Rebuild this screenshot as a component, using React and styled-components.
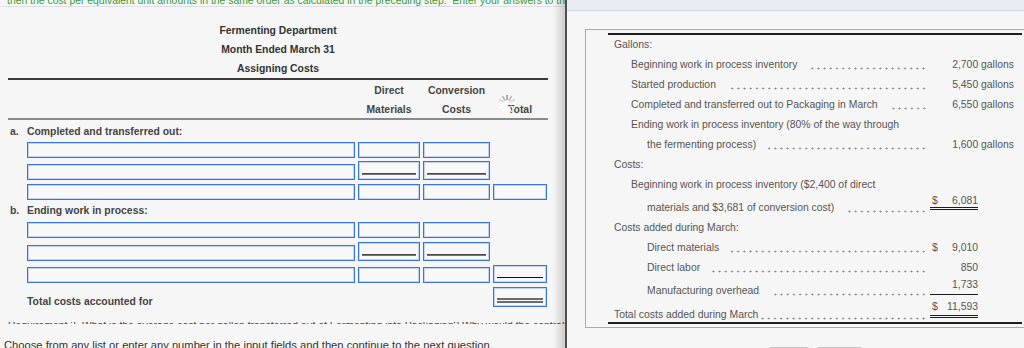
import React from 'react';
import styled, { createGlobalStyle } from 'styled-components';

const Global = createGlobalStyle`
  html, body { margin: 0; padding: 0; background: #f6f6f6; }
  body { font-family: "Liberation Sans", Arial, sans-serif; }
  #root { width: 1024px; height: 348px; overflow: hidden; }
`;

const Page = styled.div`
  display: flex;
  width: 1024px;
  height: 348px;
  overflow: hidden;
  background: #f6f6f6;
  font-family: "Liberation Sans", Arial, sans-serif;
`;

/* ---------- left panel ---------- */
const LeftPanel = styled.div`
  position: relative;
  flex: none;
  width: 565px;
  height: 100%;
  overflow: hidden;
  border-right: 2px solid #505050;
  &::after {
    content: "";
    position: absolute;
    top: 0;
    right: 0;
    bottom: 0;
    width: 12px;
    background: linear-gradient(to right, rgba(0, 0, 0, 0), rgba(0, 0, 0, 0.17));
    pointer-events: none;
  }
`;

const TopNote = styled.div`
  margin-top: -5px;
  height: 11px;
  padding-left: 7px;
  font-size: 10.4px;
  line-height: 12px;
  color: #3a9a3a;
  white-space: nowrap;
  overflow: hidden;
  border-bottom: 1px solid #dde1e7;
`;

const Sheet = styled.div`
  width: 540px;
  margin: 14px 0 0 8px;
`;

const Heading = styled.div`
  text-align: center;
  font-size: 10.4px;
  font-weight: bold;
  line-height: 19px;
  color: #333;
`;

const Rule = styled.div`
  height: 2px;
  background: ${(p) => p.$tone};
`;

const LineGrid = styled.div`
  position: relative;
  display: grid;
  grid-template-columns: 328px 62px 67px 54px;
  column-gap: 3px;
  align-items: end;
  padding-left: 19px;
  margin-top: ${(p) => p.$mt || 0}px;
`;

const ColHeadRow = styled(LineGrid)`
  height: 38px;
  box-sizing: border-box;
  padding-top: 1px;
  align-items: start;
`;

const ColHead = styled.div`
  grid-column: ${(p) => p.$col};
  text-align: center;
  font-size: 10.4px;
  font-weight: bold;
  color: #444;
  line-height: 19px;
`;

const HeadLine = styled.div`
  height: 19px;
`;

const Spinner = styled.svg`
  position: absolute;
  left: 489px;
  top: 14px;
  width: 20px;
  height: 20px;
`;

const SectionLabel = styled.div`
  display: flex;
  margin-top: ${(p) => p.$mt}px;
  padding-left: 2px;
  font-size: 10.4px;
  font-weight: bold;
  line-height: 18px;
  color: #444;
`;

const Marker = styled.span`
  flex: none;
  width: 17px;
`;

const Field = styled.div`
  position: relative;
  grid-column: ${(p) => p.$col};
  height: ${(p) => p.$h || 16}px;
  box-sizing: border-box;
  border: 1px solid #3a74d6;
  box-shadow: inset 0 0 0 1px rgba(58, 116, 214, 0.28);
  background: #f8f8f8;
  &::after {
    content: "";
    position: absolute;
    left: 3px;
    right: 3px;
    display: ${(p) => (p.$line ? 'block' : 'none')};
    bottom: ${(p) => (p.$line === 'double' ? 3 : 4)}px;
    height: ${(p) => (p.$line === 'double' ? 5 : p.$line === 'black' ? 1 : 2)}px;
    box-sizing: border-box;
    background: ${(p) =>
      p.$line === 'gray' ? 'linear-gradient(#333, #8a8a8a)' : p.$line === 'black' ? '#111' : 'transparent'};
    border-top: ${(p) => (p.$line === 'double' ? '2px solid #6a6a6a' : 'none')};
    border-bottom: ${(p) => (p.$line === 'double' ? '2px solid #6a6a6a' : 'none')};
  }
`;

const TotalLabel = styled.div`
  grid-column: 1 / 4;
  font-size: 10.4px;
  font-weight: bold;
  line-height: 10px;
  color: #444;
`;

const ClipLine = styled.div`
  height: 2px;
  margin-top: 15px;
  overflow: hidden;
  padding-left: 8px;
`;

const ClipText = styled.div`
  margin-top: -2px;
  font-size: 10.4px;
  line-height: 12px;
  color: #444;
  white-space: nowrap;
`;

const Instruction = styled.div`
  margin-top: 14px;
  padding-left: 4px;
  font-size: 11.2px;
  line-height: 14px;
  color: #333;
  white-space: nowrap;
`;

/* ---------- right panel ---------- */
const RightPanel = styled.div`
  flex: 1;
  min-width: 0;
  height: 100%;
  overflow: hidden;
  display: flex;
  flex-direction: column;
`;

const TopBar = styled.div`
  flex: none;
  height: 10px;
  background: #e9edf2;
  border-bottom: 1px solid #c6d9ef;
`;

const RightBody = styled.div`
  padding: 18px 0 0 18px;
`;

const DataBox = styled.div`
  width: 445px;
  box-sizing: border-box;
  border: 1px solid #ababab;
  padding: 3px 7px 3px 22px;
  font-size: 10.4px;
  color: #555;
`;

const BoxRule = styled.div`
  height: 2px;
  background: #1e1e1e;
`;

const DataRow = styled.div`
  display: flex;
  align-items: flex-end;
  height: ${(p) => p.$h}px;
`;

const Label = styled.span`
  flex: none;
  white-space: nowrap;
  margin-left: ${(p) => p.$indent}px;
  line-height: ${(p) => p.$lh}px;
`;

const Leader = styled.span`
  flex: 1;
  min-width: 0;
  height: ${(p) => p.$lh}px;
  margin-left: ${(p) => p.$gap}px;
  background-image: radial-gradient(circle at 3.1px 1.5px, #858585 0.75px, rgba(133, 133, 133, 0) 1.2px);
  background-size: 6.2px 3px;
  background-repeat: repeat-x;
  background-position: right 0 bottom ${(p) => (p.$lh === 20 ? 5.5 : 2.5)}px;
`;

const Gallons = styled.span`
  flex: none;
  width: 87px;
  margin-right: 8px;
  text-align: right;
  line-height: 20px;
  white-space: nowrap;
`;

const Money = styled.span`
  flex: none;
  display: flex;
  justify-content: space-between;
  width: 48px;
  box-sizing: border-box;
  margin: 0 44px ${(p) => p.$mb || 0}px 3px;
  padding: 0 0 ${(p) => p.$pb || 0}px 2px;
  line-height: ${(p) => p.$lh}px;
  border-bottom: ${(p) =>
    p.$rule === 'double' ? '3px double #1e1e1e' : p.$rule === 'single' ? '1px solid #1e1e1e' : 'none'};
`;

const ButtonRow = styled.div`
  display: flex;
  gap: 6px;
  margin-top: 19px;
  padding-left: 183px;
`;

const GhostButton = styled.button`
  width: ${(p) => p.$w}px;
  height: 24px;
  padding: 0;
  border: 1px solid #c4c4c4;
  border-radius: 3px;
  background: #efefef;
`;

const rows = [
  { label: 'Gallons:', indent: 6 },
  { label: 'Beginning work in process inventory', indent: 23, dots: true, gal: '2,700 gallons' },
  { label: 'Started production', indent: 23, dots: true, gal: '5,450 gallons' },
  { label: 'Completed and transferred out to Packaging in March', indent: 23, dots: true, gal: '6,550 gallons' },
  { label: 'Ending work in process inventory (80% of the way through', indent: 23 },
  { label: 'the fermenting process)', indent: 39, dots: true, gal: '1,600 gallons' },
  { label: 'Costs:', indent: 6 },
  { label: 'Beginning work in process inventory ($2,400 of direct', indent: 23 },
  {
    label: 'materials and $3,681 of conversion cost)',
    indent: 39,
    dots: true,
    h: 23,
    money: { sign: '$', amt: '6,081', rule: 'double', lh: 12, pb: 0, mb: 8 },
  },
  { label: 'Costs added during March:', indent: 6 },
  { label: 'Direct materials', indent: 39, dots: true, money: { sign: '$', amt: '9,010', lh: 20 } },
  { label: 'Direct labor', indent: 39, dots: true, money: { amt: '850', lh: 20 } },
  {
    label: 'Manufacturing overhead',
    indent: 39,
    dots: true,
    h: 23,
    money: { amt: '1,733', rule: 'single', lh: 12, pb: 3, mb: 6 },
  },
  {
    label: 'Total costs added during March',
    indent: 6,
    dots: true,
    h: 21,
    lh: 14,
    gap: 1,
    money: { sign: '$', amt: '11,593', rule: 'double', lh: 12, pb: 2, mb: 4 },
  },
];

const spokes = Array.from({ length: 12 }, (_, i) => i * 30);
const spokeStyle = (a) => {
  if (a === 0) return { stroke: '#8f8f8f', opacity: 0.85 };
  if (a === 30 || a === 330) return { stroke: '#9a9a9a', opacity: 0.7 };
  if (a === 60 || a === 300) return { stroke: '#b0b0b0', opacity: 0.45 };
  return { stroke: '#ffffff', opacity: 0.85 };
};

function LoadingSpinner() {
  return (
    <Spinner viewBox="0 0 20 20">
      {spokes.map((a) => {
        const s = spokeStyle(a);
        return (
          <line
            key={a}
            x1="10"
            y1="1.5"
            x2="10"
            y2="5.5"
            stroke={s.stroke}
            strokeOpacity={s.opacity}
            strokeWidth="1.6"
            strokeLinecap="round"
            transform={`rotate(${a} 10 10)`}
          />
        );
      })}
    </Spinner>
  );
}

function InputTriple({ mt, mid, total, totalH, totalLine }) {
  return (
    <LineGrid $mt={mt}>
      <Field $col="1" />
      <Field $col="2" $h={mid ? 19 : 16} $line={mid ? 'gray' : undefined} />
      <Field $col="3" $h={mid ? 19 : 16} $line={mid ? 'gray' : undefined} />
      {total && <Field $col="4" $h={totalH || 16} $line={totalLine} />}
    </LineGrid>
  );
}

export default function App() {
  return (
    <Page>
      <Global />
      <LeftPanel>
        <TopNote>
          then the cost per equivalent unit amounts in the same order as calculated in the preceding step.&nbsp; Enter your answers to the nearest whole dollar.
        </TopNote>
        <Sheet>
          <Heading>
            <div>Fermenting Department</div>
            <div>Month Ended March 31</div>
            <div>Assigning Costs</div>
          </Heading>
          <Rule $tone="#3a3a3a" />
          <ColHeadRow>
            <ColHead $col="2">
              <HeadLine>Direct</HeadLine>
              <HeadLine>Materials</HeadLine>
            </ColHead>
            <ColHead $col="3">
              <HeadLine>Conversion</HeadLine>
              <HeadLine>Costs</HeadLine>
            </ColHead>
            <ColHead $col="4">
              <HeadLine />
              <HeadLine>Total</HeadLine>
            </ColHead>
            <LoadingSpinner />
          </ColHeadRow>
          <Rule $tone="#8a8a8a" />

          <SectionLabel $mt={3}>
            <Marker>a.</Marker>
            <span>Completed and transferred out:</span>
          </SectionLabel>
          <InputTriple mt={1} />
          <InputTriple mt={3} mid />
          <InputTriple mt={4} total />

          <SectionLabel $mt={2}>
            <Marker>b.</Marker>
            <span>Ending work in process:</span>
          </SectionLabel>
          <InputTriple mt={2} />
          <InputTriple mt={4} mid />
          <InputTriple mt={4} total totalH={18} totalLine="black" />

          <LineGrid $mt={4}>
            <TotalLabel>Total costs accounted for</TotalLabel>
            <Field $col="4" $h={20} $line="double" />
          </LineGrid>
        </Sheet>
        <ClipLine>
          <ClipText>
            Requirement 3. What is the average cost per gallon transferred out of Fermenting into Packaging? Why would the controller of Iris Winery want to know this cost?
          </ClipText>
        </ClipLine>
        <Instruction>
          Choose from any list or enter any number in the input fields and then continue to the next question.
        </Instruction>
      </LeftPanel>

      <RightPanel>
        <TopBar />
        <RightBody>
          <DataBox>
            <BoxRule />
            {rows.map((r, i) => {
              const lh = r.lh || 20;
              return (
                <DataRow key={i} $h={r.h || 20}>
                  <Label $indent={r.indent} $lh={lh}>
                    {r.label}
                  </Label>
                  {r.dots && <Leader $lh={lh} $gap={r.gap || 12} />}
                  {r.gal && <Gallons>{r.gal}</Gallons>}
                  {r.money && (
                    <Money $lh={r.money.lh} $rule={r.money.rule} $pb={r.money.pb} $mb={r.money.mb}>
                      <span>{r.money.sign || ''}</span>
                      <span>{r.money.amt}</span>
                    </Money>
                  )}
                </DataRow>
              );
            })}
            <BoxRule />
          </DataBox>
          <ButtonRow>
            <GhostButton $w={42} aria-label="previous" />
            <GhostButton $w={47} aria-label="next" />
          </ButtonRow>
        </RightBody>
      </RightPanel>
    </Page>
  );
}
